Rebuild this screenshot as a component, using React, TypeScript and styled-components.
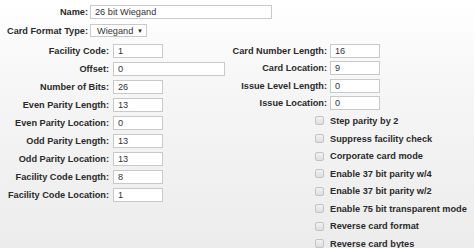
import styled, { createGlobalStyle } from 'styled-components';

const GlobalStyle = createGlobalStyle`
  html, body {
    margin: 0;
    padding: 0;
    width: 474px;
    height: 248px;
    overflow: hidden;
  }
  body {
    background: linear-gradient(to bottom, #ffffff 0%, #f6f6f6 35%, #ececec 100%);
    font-family: "Liberation Sans", Arial, sans-serif;
    color: #2b2b2b;
  }
`;

const leftFields = [
  { label: 'Facility Code:', value: '1' },
  { label: 'Offset:', value: '0', wide: true },
  { label: 'Number of Bits:', value: '26' },
  { label: 'Even Parity Length:', value: '13' },
  { label: 'Even Parity Location:', value: '0' },
  { label: 'Odd Parity Length:', value: '13' },
  { label: 'Odd Parity Location:', value: '13' },
  { label: 'Facility Code Length:', value: '8' },
  { label: 'Facility Code Location:', value: '1' },
];

const rightFields = [
  { label: 'Card Number Length:', value: '16' },
  { label: 'Card Location:', value: '9' },
  { label: 'Issue Level Length:', value: '0' },
  { label: 'Issue Location:', value: '0' },
];

const options = [
  'Step parity by 2',
  'Suppress facility check',
  'Corporate card mode',
  'Enable 37 bit parity w/4',
  'Enable 37 bit parity w/2',
  'Enable 75 bit transparent mode',
  'Reverse card format',
  'Reverse card bytes',
];

const App = () => {
  return (
    <>
      <GlobalStyle />
      <Form>
        <TopGrid>
          <Label>Name:</Label>
          <TextInput $width={182} defaultValue="26 bit Wiegand" />
          <Label>Card Format Type:</Label>
          <SelectBox>
            <span>Wiegand</span>
            <Arrow>▼</Arrow>
          </SelectBox>
        </TopGrid>

        <Columns>
          <FieldGrid $labelWidth={109} $gap={4} $row={18} $width={228}>
            {leftFields.map(f => (
              <Row key={f.label}>
                <Label>{f.label}</Label>
                <TextInput $width={f.wide ? 112 : 50} defaultValue={f.value} />
              </Row>
            ))}
          </FieldGrid>

          <FieldGrid $labelWidth={99} $gap={3} $row={17.55}>
            {rightFields.map(f => (
              <Row key={f.label}>
                <Label>{f.label}</Label>
                <TextInput $width={50} defaultValue={f.value} />
              </Row>
            ))}
            {options.map(o => (
              <Row key={o}>
                <BoxCell>
                  <Check type="checkbox" />
                </BoxCell>
                <CheckLabel>{o}</CheckLabel>
              </Row>
            ))}
          </FieldGrid>
        </Columns>
      </Form>
    </>
  );
};

const Form = styled.div`
  padding-top: 4px;
`;

const TopGrid = styled.div`
  display: grid;
  grid-template-columns: 88px auto;
  grid-auto-rows: 15px;
  column-gap: 2px;
  row-gap: 4px;
  align-items: center;
  justify-items: start;
`;

const Columns = styled.div`
  display: flex;
  margin-top: 4px;
`;

const FieldGrid = styled.div<{ $labelWidth: number; $gap: number; $row: number; $width?: number }>`
  display: grid;
  grid-template-columns: ${p => p.$labelWidth}px auto;
  grid-auto-rows: ${p => p.$row}px;
  column-gap: ${p => p.$gap}px;
  align-items: center;
  justify-items: start;
  ${p => (p.$width ? `width: ${p.$width}px;` : '')}
  flex: none;
`;

const Row = styled.div`
  display: contents;
`;

const Label = styled.label`
  justify-self: end;
  font-size: 9.2px;
  font-weight: bold;
  white-space: nowrap;
  color: #2b2b2b;
`;

const TextInput = styled.input<{ $width: number }>`
  box-sizing: border-box;
  width: ${p => p.$width}px;
  height: 14px;
  margin: 0;
  padding: 0 4px;
  border: 1px solid #c9c9c9;
  background: #fff;
  font-family: "Liberation Sans", Arial, sans-serif;
  font-size: 9.2px;
  color: #333;
  outline: none;
`;

const SelectBox = styled.div`
  box-sizing: border-box;
  width: 57px;
  height: 13px;
  display: flex;
  align-items: center;
  justify-content: space-between;
  padding: 0 3px 0 6px;
  border: 1px solid #c9c9c9;
  background: #fff;
  font-size: 9.2px;
  color: #333;
`;

const Arrow = styled.span`
  font-size: 6px;
  color: #222;
`;

const BoxCell = styled.div`
  justify-self: end;
  display: flex;
  align-items: center;
  padding-right: 3px;
`;

const Check = styled.input`
  appearance: none;
  box-sizing: border-box;
  width: 9px;
  height: 9px;
  margin: 0;
  border: 1px solid #c4c4c4;
  border-radius: 2px;
  background: linear-gradient(to bottom, #f2f2f2, #dedede);
`;

const CheckLabel = styled.label`
  font-size: 9.2px;
  font-weight: bold;
  white-space: nowrap;
  color: #2b2b2b;
`;

export default App;
